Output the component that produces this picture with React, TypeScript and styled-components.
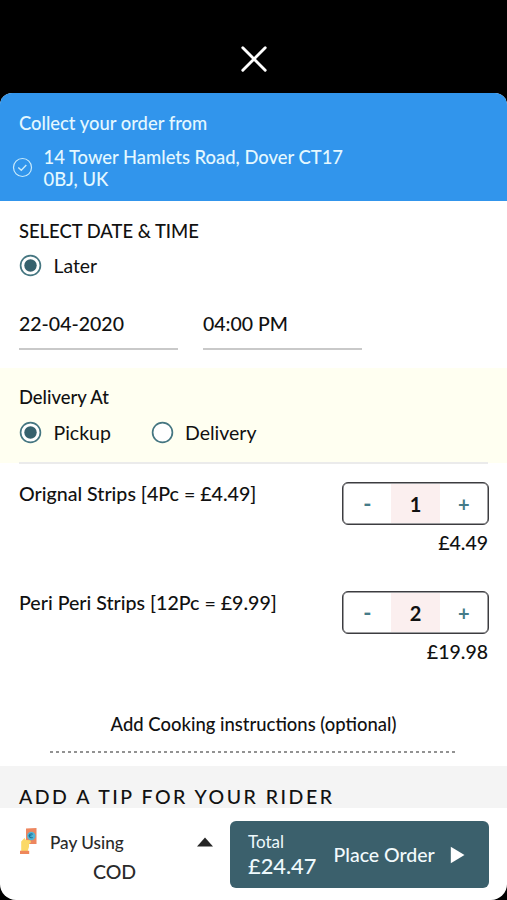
import React from "react";
import styled, { createGlobalStyle } from "styled-components";

const GlobalStyle = createGlobalStyle`
  * { box-sizing: border-box; }
  html, body { margin: 0; background: #000; }
  body { font-family: Lato, Carlito, sans-serif; color: #111; }
  button { font: inherit; border: 0; padding: 0; background: none; }
`;

const Screen = styled.div`
  width: 507px;
  height: 900px;
  display: flex;
  flex-direction: column;
  background: #000;
  overflow: hidden;
`;

const TopBar = styled.header`
  height: 92.5px;
  flex: none;
  display: flex;
  justify-content: center;
  padding-top: 46px;
`;

const CloseButton = styled.button`
  width: 26px;
  height: 26px;
  svg { display: block; }
`;

const Sheet = styled.main`
  flex: 1;
  display: flex;
  flex-direction: column;
  background: #fff;
  border-radius: 12px 12px 16px 16px;
  overflow: hidden;
`;

const Text = styled.span<{ $size?: number; $weight?: number; $gap?: number }>`
  display: block;
  font-size: ${(p) => p.$size ?? 18.4}px;
  font-weight: ${(p) => p.$weight ?? 500};
  letter-spacing: ${(p) => p.$gap ?? 0}px;
  line-height: 24px;
  white-space: nowrap;
`;

const PickupBanner = styled.section`
  height: 108.5px;
  flex: none;
  padding: 18px 0 0 19px;
  background: #3195ec;
  color: #e4f8ff;
`;

const AddressRow = styled.div`
  display: flex;
  align-items: center;
  margin: 11.5px 0 0 -7px;
  gap: 10.5px;
  ${Text} { line-height: 22px; }
  svg { flex: none; margin-bottom: 2px; }
`;

const Schedule = styled.section`
  height: 167px;
  flex: none;
  padding: 18px 19px 0;
`;

const RadioRow = styled.div<{ $top: number }>`
  display: flex;
  margin-top: ${(p) => p.$top}px;
`;

const RadioOption = styled.label<{ $width?: number }>`
  display: flex;
  align-items: center;
  gap: 11.5px;
  width: ${(p) => (p.$width ? p.$width + "px" : "auto")};
  svg { display: block; margin-top: -1px; }
`;

const FieldRow = styled.div`
  display: flex;
  gap: 25px;
  margin-top: 34px;
`;

const Field = styled.div`
  width: 159px;
  height: 38px;
  border-bottom: 2px solid #c9c9c9;
`;

const DeliverySection = styled.section`
  height: 95px;
  flex: none;
  padding: 17px 19px 0;
  background: #fffff1;
`;

const Divider = styled.hr`
  height: 2px;
  flex: none;
  margin: -1px 19px 0;
  border: 0;
  background: #ebebeb;
`;

const CartList = styled.section`
  flex: none;
  padding: 18px 18px 0 19px;
`;

const CartItem = styled.article`
  height: 109px;
  display: flex;
  justify-content: space-between;
`;

const ItemControls = styled.div`
  display: flex;
  flex-direction: column;
  align-items: flex-end;
`;

const Stepper = styled.div`
  width: 147px;
  height: 43px;
  display: grid;
  grid-template-columns: 47.5px 49px 47.5px;
  padding: 1px 0.5px;
  border: 1px solid #3c3c40;
  box-shadow: inset 0 0 0 0.5px #3c3c40;
  border-radius: 6px;
  margin-bottom: 6px;
`;

const StepButton = styled.button`
  display: grid;
  place-items: center;
  color: #457b88;
`;

const Quantity = styled.div`
  display: grid;
  place-items: center;
  background: #fbefef;
`;

const Price = styled.div`
  padding-right: 1px;
`;

const Instructions = styled.section`
  height: 66px;
  flex: none;
  display: flex;
  flex-direction: column;
  align-items: center;
  padding-top: 12px;
`;

const DottedRule = styled.div`
  width: 407px;
  height: 2px;
  margin-top: 15px;
  background: repeating-linear-gradient(90deg, #929292 0 3px, transparent 3px 6px);
`;

const TipHeading = styled.section`
  height: 42px;
  flex: none;
  padding: 19px 19px 0;
  background: #f4f4f4;
`;

const Footer = styled.footer`
  flex: 1;
  display: flex;
  padding: 13px 18px 0 19px;
`;

const PaymentMethod = styled.div`
  width: 211px;
  display: grid;
  grid-template-columns: 31px 1fr 34px;
  grid-template-rows: 42px 28px;
  color: #2a2a2a;
`;

const PaymentCell = styled.div<{ $top: number }>`
  padding-top: ${(p) => p.$top}px;
  svg { display: block; }
`;

const PaymentName = styled.div`
  grid-column: 1 / -1;
  padding: 0 0 0 74px;
  margin-top: -3px;
`;

const OrderButton = styled.button`
  width: 259px;
  height: 67px;
  display: flex;
  align-items: center;
  padding: 0 24px 0 18px;
  border-radius: 6px;
  background: #3b606c;
  color: #f2fafc;
  text-align: left;
`;

const Total = styled.div`
  width: 85.5px;
  padding-bottom: 2px;
  color: #eef9fc;
`;

const OrderLabel = styled.div`
  flex: 1;
`;

function Radio({ checked = false }: { checked?: boolean }) {
  return (
    <svg width="23" height="23" viewBox="0 0 23 23">
      <circle cx="11.5" cy="11.5" r="9.9" fill="#fff" stroke="#457681" strokeWidth="1.7" />
      {checked && <circle cx="11.5" cy="11.5" r="6.2" fill="#36616d" />}
    </svg>
  );
}

function CashInHand() {
  return (
    <svg width="20" height="29" viewBox="0 0 20 29">
      <path d="M7 1.5 17.5 1V17H7Z" fill="#ed865f" />
      <circle cx="12.3" cy="9" r="4.2" fill="#52b5d5" />
      <path d="M13.8 7.2c-2.6-1-3.6.4-3.5 1.8s1.5 2.4 3.4 1.4M9.5 8.7h3" fill="none" stroke="#1b719b" strokeWidth="1.1" />
      <path d="M2.2 24V14.5L5.5 11 6.8 13 11.3 13.2 12 15.2 10 17V20L8.7 24Z" fill="#fbd967" />
      <path d="M1 23.8H10.2V27H1Z" fill="#ee875b" />
    </svg>
  );
}

const items = [
  { name: "Orignal Strips [4Pc = £4.49]", quantity: 1, price: "£4.49" },
  { name: "Peri Peri Strips [12Pc = £9.99]", quantity: 2, price: "£19.98" },
];

export default function App() {
  return (
    <Screen>
      <GlobalStyle />
      <TopBar>
        <CloseButton aria-label="Close">
          <svg width="26" height="26" viewBox="0 0 26 26">
            <path d="M1.8 1.8 24.2 24.2M24.2 1.8 1.8 24.2" stroke="#fff" strokeWidth="2.9" strokeLinecap="round" />
          </svg>
        </CloseButton>
      </TopBar>
      <Sheet>
        <PickupBanner>
          <Text>Collect your order from</Text>
          <AddressRow>
            <svg width="21" height="21" viewBox="0 0 21 21" fill="none" stroke="#c8eafb">
              <circle cx="10.5" cy="10.5" r="9" strokeWidth="1.2" />
              <path d="m6.3 10.5 3 2.8 5-5.4" strokeWidth="1.4" />
            </svg>
            <div>
              <Text>14 Tower Hamlets Road, Dover CT17</Text>
              <Text>0BJ, UK</Text>
            </div>
          </AddressRow>
        </PickupBanner>
        <Schedule>
          <Text>SELECT DATE &amp; TIME</Text>
          <RadioRow $top={11}>
            <RadioOption>
              <Radio checked />
              <Text $size={19.4} $weight={400}>Later</Text>
            </RadioOption>
          </RadioRow>
          <FieldRow>
            <Field><Text $size={19.5}>22-04-2020</Text></Field>
            <Field><Text $size={19.5}>04:00 PM</Text></Field>
          </FieldRow>
        </Schedule>
        <DeliverySection>
          <Text>Delivery At</Text>
          <RadioRow $top={12}>
            <RadioOption $width={131.5}>
              <Radio checked />
              <Text $size={19.5} $weight={400}>Pickup</Text>
            </RadioOption>
            <RadioOption>
              <Radio />
              <Text $size={19.5} $weight={400}>Delivery</Text>
            </RadioOption>
          </RadioRow>
        </DeliverySection>
        <Divider />
        <CartList>
          {items.map((item) => (
            <CartItem key={item.name}>
              <Text $size={19.6}>{item.name}</Text>
              <ItemControls>
                <Stepper>
                  <StepButton><Text $size={22} $weight={700}>-</Text></StepButton>
                  <Quantity><Text $size={20} $weight={700}>{item.quantity}</Text></Quantity>
                  <StepButton><Text $size={20} $weight={700}>+</Text></StepButton>
                </Stepper>
                <Price><Text $size={19.5}>{item.price}</Text></Price>
              </ItemControls>
            </CartItem>
          ))}
        </CartList>
        <Instructions>
          <Text $size={18.45}>Add Cooking instructions (optional)</Text>
          <DottedRule />
        </Instructions>
        <TipHeading>
          <Text $size={19.5} $gap={2.5}>ADD A TIP FOR YOUR RIDER</Text>
        </TipHeading>
        <Footer>
          <PaymentMethod>
            <PaymentCell $top={6}><CashInHand /></PaymentCell>
            <PaymentCell $top={10}><Text $size={17.2}>Pay Using</Text></PaymentCell>
            <PaymentCell $top={16}>
              <svg width="18" height="10" viewBox="0 0 18 10"><path d="M1 9.5 9 .5 17 9.5Z" fill="#252525" /></svg>
            </PaymentCell>
            <PaymentName><Text $size={19.5}>COD</Text></PaymentName>
          </PaymentMethod>
          <OrderButton>
            <Total>
              <Text $size={17} $weight={400}>Total</Text>
              <Text $size={21.8}>£24.47</Text>
            </Total>
            <OrderLabel><Text $size={19.5}>Place Order</Text></OrderLabel>
            <svg width="15" height="18" viewBox="0 0 15 18"><path d="M.8.8 14.5 9 .8 17.2Z" fill="#fff" /></svg>
          </OrderButton>
        </Footer>
      </Sheet>
    </Screen>
  );
}
